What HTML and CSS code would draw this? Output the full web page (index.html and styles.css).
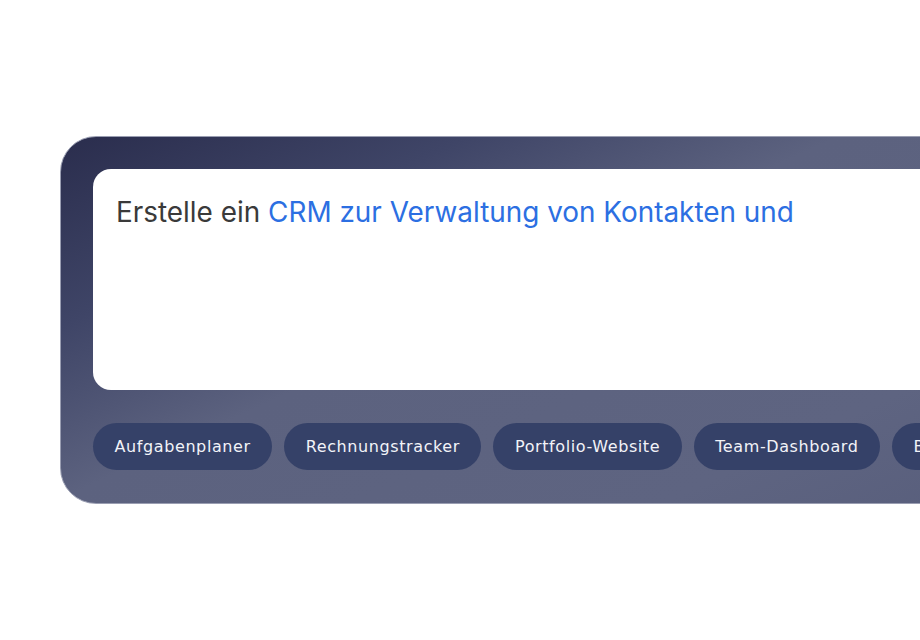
FILE: index.html
```html
<!DOCTYPE html>
<html lang="de">
<head>
    <meta charset="UTF-8">
    <meta name="viewport" content="width=device-width, initial-scale=1.0">
    <title>Prompt</title>
    <link rel="stylesheet" href="styles.css">
</head>
<body>
    <div class="stage">
        <div class="prompt-panel">
            <div class="prompt-box">
                <p class="prompt-text">Erstelle ein <span class="typed">CRM zur Verwaltung von Kontakten und</span></p>
            </div>
            <div class="chips">
                <button class="chip">Aufgabenplaner</button>
                <button class="chip">Rechnungstracker</button>
                <button class="chip">Portfolio-Website</button>
                <button class="chip">Team-Dashboard</button>
                <button class="chip">Buchungssystem</button>
            </div>
        </div>
    </div>
</body>
</html>
```

FILE: styles.css
```css
html, body {
    margin: 0;
    padding: 0;
    background-color: #FFFFFF;
    overflow: hidden;
}

.stage {
    padding: 136px 0 0 60px;
    width: 1100px;
}

.prompt-panel {
    width: 1000px;
    padding: 32px 32px 33px;
    border: 1px solid #9A9EB2;
    border-radius: 36px;
    background: linear-gradient(155deg, #2A2D4D 0%, #3F4567 22%, #5C627F 42%, #5E6481 75%, #565C7A 100%);
}

.prompt-box {
    background-color: #FFFFFF;
    border-radius: 18px;
    height: 221px;
    padding: 25px 23px;
    box-sizing: border-box;
}

.prompt-text {
    margin: 0;
    font-family: Inter, "Liberation Sans", sans-serif;
    font-size: 27.9px;
    line-height: 36px;
    color: #3A3A3A;
}

.typed {
    color: #2C6FE2;
}

.chips {
    display: flex;
    gap: 12px;
    margin-top: 33px;
}

.chip {
    height: 47px;
    padding: 0 21.5px;
    border: none;
    border-radius: 24px;
    background-color: #354168;
    color: #F2F3F8;
    font-family: "DejaVu Sans", sans-serif;
    font-size: 16px;
    letter-spacing: 0.6px;
    white-space: nowrap;
    cursor: pointer;
}
```
